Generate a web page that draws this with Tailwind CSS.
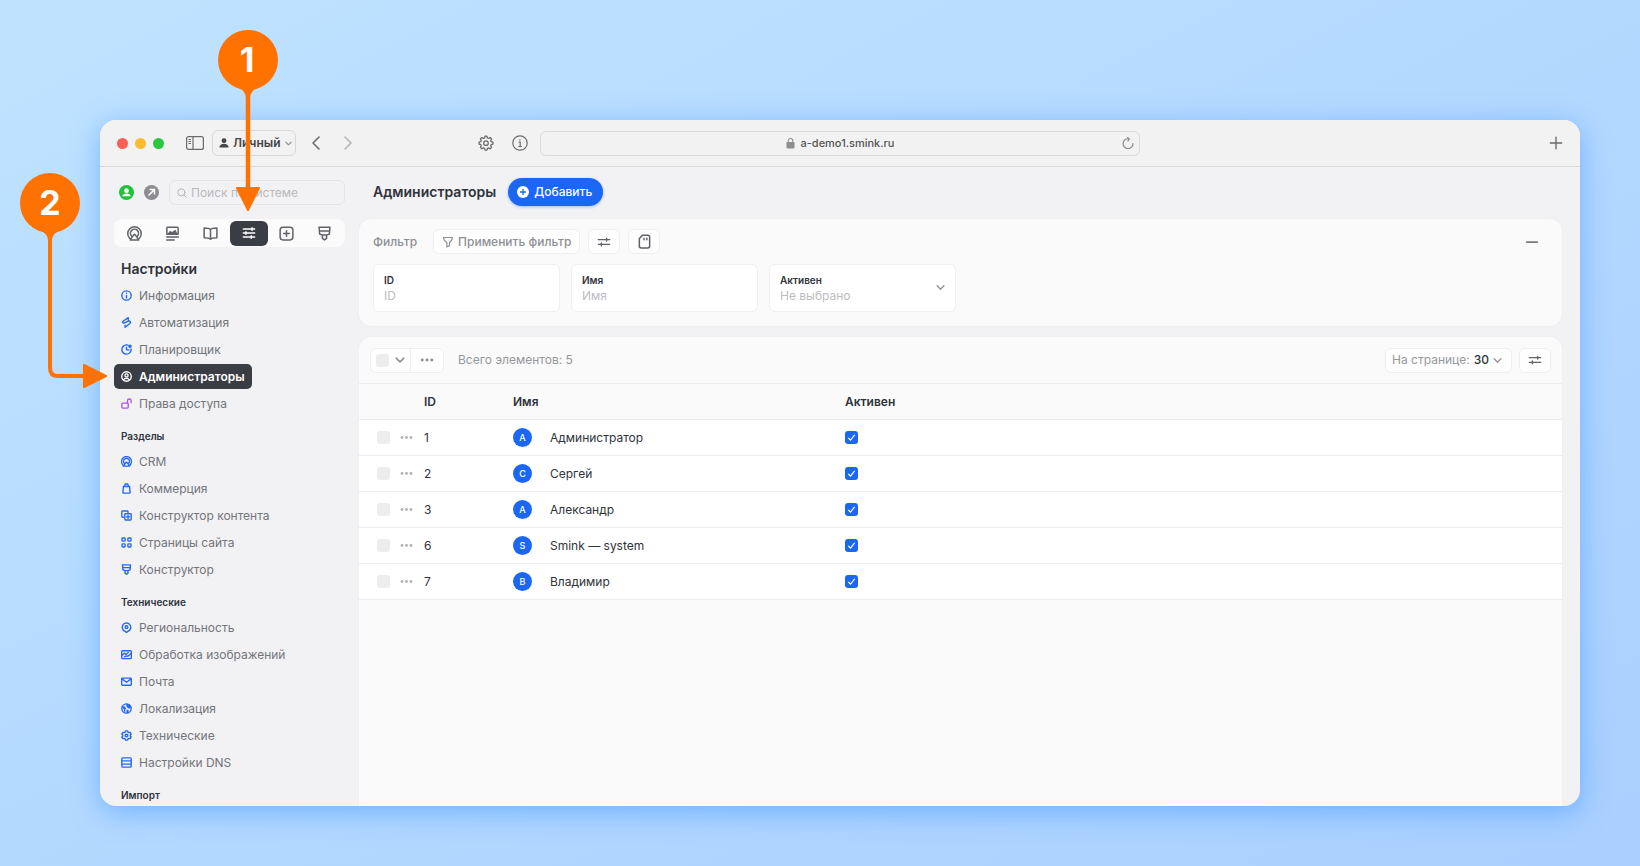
<!DOCTYPE html>
<html lang="ru">
<head>
<meta charset="utf-8">
<title>Администраторы</title>
<script src="https://cdn.jsdelivr.net/npm/@tailwindcss/browser@4"></script>
</head>
<body class="min-h-screen bg-linear-to-br from-[#bfe3ff] via-[#b4d9ff] to-[#a9d0ff] font-['Inter','Noto_Sans',sans-serif] text-xs leading-5 text-[#2f333a] [&_use]:fill-none [&_use]:stroke-current [&_use]:[stroke-width:1.6] [&_use]:[stroke-linecap:round] [&_use]:[stroke-linejoin:round]">

<!-- Icon sprite -->
<svg class="hidden" aria-hidden="true">
    <symbol id="i-cast" viewBox="0 0 16 16"><path d="M2.800 13A7.200 7.200 0 1 1 13.200 13M4.800 10.600a4.300 4.300 0 1 1 6.400 0M3.400 14.800 7.400 9.200a.8.8 0 0 1 1.200 0l4 5.600z"/></symbol>
    <symbol id="i-post" viewBox="0 0 16 16"><path d="M3 1.200h10a1 1 0 0 1 1 1v6.600H2V2.200a1 1 0 0 1 1-1zM1.800 11.800h12.400M1.800 14.800h8"/><path d="M2.500 8.500l3-3.500 2 1.500L11 4l2.500 4.500z" fill="currentColor" stroke="none"/></symbol>
    <symbol id="i-book" viewBox="0 0 16 16"><path d="M8 3.500v10.500M8 3.500C6.500 2 4 2 1.200 2v10.500c2.800 0 5.300 0 6.800 1.500 1.500-1.500 4-1.500 6.800-1.500V2C12 2 9.500 2 8 3.500z"/></symbol>
    <symbol id="i-sliders3" viewBox="0 0 16 16"><path d="M1.500 3.500h13M1.500 8h13M1.500 12.500h13M11.500 2v3M4.500 6.500v3M10.500 11v3"/></symbol>
    <symbol id="i-plusbox" viewBox="0 0 16 16"><rect x="1.200" y="1.200" width="13.600" height="13.600" rx="3"/><path d="M8 5v6M5 8h6"/></symbol>
    <symbol id="i-brush" viewBox="0 0 16 16"><path d="M2.200 1.200h11.600L13.200 8.500l-3 1.200v3.500L8 14.800l-2.200-1.600V9.700l-3-1.200zM2.500 5.300h11M5.800 9.700h4.400"/></symbol>
    <symbol id="i-info" viewBox="0 0 16 16"><circle cx="8" cy="8" r="6.800"/><path d="M8 7.800v3.700M8 4.600v.1"/></symbol>
    <symbol id="i-auto" viewBox="0 0 16 16"><path d="M10.500 1 3 6.200c-1.400 1.300-.2 3.300 1.600 2.600L10.500 6c2.600-1 4.200 1.600 2.400 3.400L6 15M10.500 1v3.200M6 15v-3.200"/></symbol>
    <symbol id="i-clock" viewBox="0 0 16 16"><path d="M14.600 7.200a6.700 6.700 0 1 1-4.600-5.500M8 4.500V8.500h3.500"/><circle cx="13" cy="3.200" r="1.600" fill="currentColor"/></symbol>
    <symbol id="i-user" viewBox="0 0 16 16"><circle cx="8" cy="8" r="6.900"/><circle cx="8" cy="6.500" r="2.300"/><path d="M3.800 13c1-3 7.400-3 8.400 0"/></symbol>
    <symbol id="i-unlock" viewBox="0 0 16 16"><rect x="1.200" y="7.500" width="9.300" height="7.200" rx="1.500"/><path d="M9.500 7.500V4a2.600 2.600 0 0 1 5.200 0v2.500"/></symbol>
    <symbol id="i-bag" viewBox="0 0 16 16"><path d="M3.500 5h9l.7 8.700a1 1 0 0 1-1 1.100H3.800a1 1 0 0 1-1-1.100zM5 5l1.200-3.500h3.600L11 5"/></symbol>
    <symbol id="i-copy" viewBox="0 0 16 16"><path d="M3.500 10.500H2.200a1 1 0 0 1-1-1v-7a1 1 0 0 1 1-1h7a1 1 0 0 1 1 1v1.500"/><rect x="5.500" y="5.500" width="9.300" height="9" rx="1"/><path d="M10.200 7.800v4.400M8 10h4.400"/></symbol>
    <symbol id="i-grid" viewBox="0 0 16 16"><rect x="1.500" y="1.500" width="4.500" height="4.500" rx="1"/><rect x="10" y="1.500" width="4.500" height="4.500" rx="1"/><rect x="1.500" y="10" width="4.500" height="4.500" rx="1"/><rect x="10" y="10" width="4.500" height="4.500" rx="1"/></symbol>
    <symbol id="i-pin" viewBox="0 0 16 16"><path d="M8 15l-2.500-1.700a6.200 6.200 0 1 1 5 0z"/><circle cx="8" cy="7.500" r="2"/></symbol>
    <symbol id="i-image" viewBox="0 0 16 16"><rect x="1" y="2.500" width="14" height="11.500" rx="1.200"/><path d="M1.500 9l3.500-3 2 2L10.500 5M5 11.500l3-1.500 2 .5 4.500-4"/></symbol>
    <symbol id="i-mail" viewBox="0 0 16 16"><rect x="1" y="3" width="14" height="10.500" rx="1"/><path d="M2 4.500l6 4.500 6-4.500"/></symbol>
    <symbol id="i-globe" viewBox="0 0 16 16"><circle cx="8" cy="8" r="6.800"/><path d="M2 5.500l3 .5 1.500 2-1.500 1 .5 3M9 2l-.5 2.500L11 7l3-.5-1.500-3zM9 10.500l1.500 1L9 14z" fill="currentColor"/></symbol>
    <symbol id="i-hex" viewBox="0 0 16 16"><path d="M6.500 1.300h3l.6 1.900 1.300.7 2-.5 1.400 2.500-1.400 1.500v1.200l1.400 1.500-1.400 2.500-2-.5-1.300.7-.6 1.900h-3l-.6-1.900-1.300-.7-2 .5-1.400-2.500 1.400-1.500V7.400L1.200 5.900l1.400-2.500 2 .5 1.300-.7z"/><circle cx="8" cy="8" r="1.900"/></symbol>
    <symbol id="i-server" viewBox="0 0 16 16"><rect x="1.200" y="1.200" width="13.600" height="13.600" rx="1.200"/><path d="M1.500 5.700h13M1.500 10.300h13"/></symbol>
    <symbol id="i-sliders2" viewBox="0 0 16 16"><path d="M1.500 5.300h13M1.500 10.700h13M11 3.800v3M5 9.200v3"/></symbol>
    <symbol id="i-sd" viewBox="0 0 16 16"><path d="M6 1.200h5.500a2 2 0 0 1 2 2v9.600a2 2 0 0 1-2 2h-7a2 2 0 0 1-2-2V4.700zM7.500 4.500v1.500M10.500 4.500v1.500"/></symbol>
    <symbol id="i-funnel" viewBox="0 0 16 16"><path d="M2 2h12l-1 3.500-3 3.500v4L6.500 14.500V9L3 5.500z"/></symbol>
    <symbol id="i-search" viewBox="0 0 16 16"><circle cx="7" cy="7" r="5.700"/><path d="M11.200 11.200l3.600 3.600"/></symbol>
    <symbol id="i-down" viewBox="0 0 16 16"><path d="M2 5l6 6 6-6" stroke-width="2.400"/></symbol>
    <symbol id="i-left" viewBox="0 0 16 16"><path d="M11 2 5 8l6 6"/></symbol>
    <symbol id="i-right" viewBox="0 0 16 16"><path d="M5 2l6 6-6 6"/></symbol>
    <symbol id="i-plus" viewBox="0 0 16 16"><path d="M8 1.500v13M1.500 8h13"/></symbol>
    <symbol id="i-minus" viewBox="0 0 16 16"><path d="M2 8h12" stroke-width="2"/></symbol>
    <symbol id="i-dots" viewBox="0 0 16 16"><g fill="currentColor" stroke="none"><circle cx="2.500" cy="8" r="1.700"/><circle cx="8" cy="8" r="1.700"/><circle cx="13.500" cy="8" r="1.700"/></g></symbol>
    <symbol id="i-gear" viewBox="0 0 20 20"><path d="M8.800 1.500h2.400l.6 2.200 1.500.6 2-1.100 1.700 1.700-1.100 2 .6 1.500 2.200.6v2.400l-2.200.6-.6 1.500 1.100 2-1.700 1.700-2-1.100-1.500.6-.6 2.200H8.800l-.6-2.200-1.500-.6-2 1.100L3 15.500l1.100-2-.6-1.500-2.200-.6V9l2.200-.6.600-1.500-1.100-2 1.700-1.700 2 1.100 1.500-.6z"/><circle cx="10" cy="10.200" r="2.800"/></symbol>
</svg>

<div class="flex h-screen min-h-[600px] pt-[120px] pr-15 pb-15 pl-25">
  <div class="flex min-w-0 flex-1 flex-col overflow-hidden rounded-2xl bg-[#f2f2f4] shadow-[0_6px_28px_rgba(50,140,255,0.5)]">

    <!-- Browser toolbar -->
    <header class="flex h-[47px] shrink-0 items-center border-b border-[#d9d9d9] bg-[#f2f2f2] px-[17px] text-[#6b6b6b]">
      <div class="flex flex-1 items-center">
        <div class="flex gap-[7px]">
          <span class="size-[11px] rounded-full bg-[#fe5d57]"></span>
          <span class="size-[11px] rounded-full bg-[#febb2e]"></span>
          <span class="size-[11px] rounded-full bg-[#29c840]"></span>
        </div>
        <button class="ml-[22px]" aria-label="Боковая панель">
          <svg class="h-[14px] w-[18px]" viewBox="0 0 18 14" fill="none" stroke="currentColor" stroke-width="1.200"><rect x=".6" y=".6" width="16.800" height="12.800" rx="2"/><path d="M7 .6v12.800M2.500 3.500h2.500M2.500 5.500h2.500M2.500 7.500h2.500"/></svg>
        </button>
        <button class="ml-2 flex h-[26px] w-[84px] items-center gap-1 rounded-md border border-[#d8d8d8] px-1.5 font-semibold text-[#454545]">
          <svg class="size-[10px] shrink-0" viewBox="0 0 12 12" fill="currentColor"><circle cx="6" cy="3.200" r="2.900"/><path d="M.5 11.500c0-6 11-6 11 0z"/></svg>
          Личный
          <svg class="ml-auto size-[7px] shrink-0 text-[#888]"><use href="#i-down"/></svg>
        </button>
        <button class="ml-3" aria-label="Назад"><svg class="size-4"><use href="#i-left"/></svg></button>
        <button class="ml-4 text-[#b5b5b5]" aria-label="Вперёд"><svg class="size-4"><use href="#i-right"/></svg></button>
        <button class="ml-auto" aria-label="Параметры"><svg class="size-4"><use href="#i-gear"/></svg></button>
        <button class="ml-[18px] mr-3" aria-label="О странице">
          <svg class="size-4" viewBox="0 0 16 16" fill="none" stroke="currentColor" stroke-width="1.200"><circle cx="8" cy="8" r="7.200"/><path d="M6.500 7h1.700v4.300M6.300 11.500h3.600M7.900 4.200v1.200"/></svg>
        </button>
      </div>
      <div class="flex h-[25px] w-[600px] items-center rounded-md border border-[#dadada] px-[5px] text-[11px] font-medium">
        <span class="flex flex-1 items-center justify-center gap-1.5 pl-3 text-[#555]">
          <svg class="h-3 w-[9px] text-[#8e8e8e]" viewBox="0 0 10 12"><rect x=".5" y="5" width="9" height="7" rx="1.200" fill="currentColor"/><path d="M2.500 5.500V3.500a2.500 2.500 0 0 1 5 0v2" fill="none" stroke="currentColor" stroke-width="1.200"/></svg>
          a-demo1.smink.ru
        </span>
        <button aria-label="Обновить" class="text-[#8b8b8b]"><svg class="size-3" viewBox="0 0 12 12" fill="none" stroke="currentColor" stroke-width="1.200" stroke-linecap="round" stroke-linejoin="round"><path d="M10.900 6.500A4.900 4.900 0 1 1 6.800 1.800M5.500.6l1.900 1.400L6 3.900"/></svg></button>
      </div>
      <div class="flex flex-1 justify-end">
        <button aria-label="Новая вкладка"><svg class="size-[14px]"><use href="#i-plus"/></svg></button>
      </div>
    </header>

    <div class="flex min-h-0 flex-1">
      <!-- Sidebar -->
      <aside class="w-[259px] shrink-0 overflow-hidden px-[14px] pt-[13px] text-[#72757b]">
        <div class="flex items-center pl-[5px]">
          <svg class="size-[15px]" viewBox="0 0 16 16"><circle cx="8" cy="8" r="8" fill="#20c13c"/><circle cx="8" cy="6" r="2.500" fill="#fff"/><path d="M3.500 12c.5-4 8.500-4 9 0z" fill="#fff"/></svg>
          <svg class="ml-2.5 size-[15px]" viewBox="0 0 16 16"><circle cx="8" cy="8" r="8" fill="#8c8c91"/><path d="M4.800 11.200l6-6M6 4.800h5.200V10" fill="none" stroke="#fff" stroke-width="1.600"/></svg>
          <label class="ml-2.5 flex h-[25px] min-w-0 flex-1 items-center gap-1 rounded-md border border-[#e4e4e6] px-[7px] text-[#b5b5b9]">
            <svg class="size-2.5 shrink-0"><use href="#i-search"/></svg>
            <input type="search" aria-label="Поиск по системе" placeholder="Поиск по системе" class="w-full min-w-0 bg-transparent outline-none placeholder:text-[#b9b9bd]">
          </label>
        </div>
        <nav class="mt-[14px] grid h-7 grid-cols-6 items-center rounded-lg bg-[#fbfbfb] px-px text-[#606268]" aria-label="Разделы системы">
          <button class="flex h-[25px] items-center justify-center" aria-label="CRM"><svg class="size-[15px]"><use href="#i-cast"/></svg></button>
          <button class="flex h-[25px] items-center justify-center" aria-label="Контент"><svg class="size-[15px]"><use href="#i-post"/></svg></button>
          <button class="flex h-[25px] items-center justify-center" aria-label="Справочники"><svg class="size-[15px]"><use href="#i-book"/></svg></button>
          <button class="flex h-[25px] items-center justify-center rounded-md bg-[#3a3d44] text-white" aria-label="Настройки"><svg class="size-[14px]"><use href="#i-sliders3"/></svg></button>
          <button class="flex h-[25px] items-center justify-center" aria-label="Добавить"><svg class="size-[15px]"><use href="#i-plusbox"/></svg></button>
          <button class="flex h-[25px] items-center justify-center" aria-label="Оформление"><svg class="size-[15px]"><use href="#i-brush"/></svg></button>
        </nav>

        <div class="[&_use]:[stroke-width:2]!">
        <h2 class="mt-3 pl-[7px] text-sm leading-5 font-semibold text-[#2f333a]">Настройки</h2>
        <ul class="mt-1 flex flex-col items-start gap-0.5">
          <li><a href="#" class="flex h-[25px] items-center gap-[7px] px-[7px]"><svg class="size-[11px] text-[#2468f2]"><use href="#i-info"/></svg>Информация</a></li>
          <li><a href="#" class="flex h-[25px] items-center gap-[7px] px-[7px]"><svg class="size-[11px] text-[#2468f2]"><use href="#i-auto"/></svg>Автоматизация</a></li>
          <li><a href="#" class="flex h-[25px] items-center gap-[7px] px-[7px]"><svg class="size-[11px] text-[#2468f2]"><use href="#i-clock"/></svg>Планировщик</a></li>
          <li><a href="#" aria-current="page" class="flex h-[25px] items-center gap-[7px] rounded-[5px] bg-[#3a3d44] px-[7px] pr-[7px] font-semibold text-white"><svg class="size-[11px]"><use href="#i-user"/></svg>Администраторы</a></li>
          <li><a href="#" class="flex h-[25px] items-center gap-[7px] px-[7px]"><svg class="size-[11px] text-[#a855f7]"><use href="#i-unlock"/></svg>Права доступа</a></li>
        </ul>

        <h3 class="mt-[10px] pl-[7px] text-[10px] leading-5 font-semibold text-[#2f333a]">Разделы</h3>
        <ul class="mt-[3px] flex flex-col items-start gap-0.5">
          <li><a href="#" class="flex h-[25px] items-center gap-[7px] px-[7px]"><svg class="size-[11px] text-[#2468f2]"><use href="#i-cast"/></svg>CRM</a></li>
          <li><a href="#" class="flex h-[25px] items-center gap-[7px] px-[7px]"><svg class="size-[11px] text-[#2468f2]"><use href="#i-bag"/></svg>Коммерция</a></li>
          <li><a href="#" class="flex h-[25px] items-center gap-[7px] px-[7px]"><svg class="size-[11px] text-[#2468f2]"><use href="#i-copy"/></svg>Конструктор контента</a></li>
          <li><a href="#" class="flex h-[25px] items-center gap-[7px] px-[7px]"><svg class="size-[11px] text-[#2468f2]"><use href="#i-grid"/></svg>Страницы сайта</a></li>
          <li><a href="#" class="flex h-[25px] items-center gap-[7px] px-[7px]"><svg class="size-[11px] text-[#2468f2]"><use href="#i-brush"/></svg>Конструктор</a></li>
        </ul>

        <h3 class="mt-[10px] pl-[7px] text-[10px] leading-5 font-semibold text-[#2f333a]">Технические</h3>
        <ul class="mt-[3px] flex flex-col items-start gap-0.5">
          <li><a href="#" class="flex h-[25px] items-center gap-[7px] px-[7px]"><svg class="size-[11px] text-[#2468f2]"><use href="#i-pin"/></svg>Региональность</a></li>
          <li><a href="#" class="flex h-[25px] items-center gap-[7px] px-[7px]"><svg class="size-[11px] text-[#2468f2]"><use href="#i-image"/></svg>Обработка изображений</a></li>
          <li><a href="#" class="flex h-[25px] items-center gap-[7px] px-[7px]"><svg class="size-[11px] text-[#2468f2]"><use href="#i-mail"/></svg>Почта</a></li>
          <li><a href="#" class="flex h-[25px] items-center gap-[7px] px-[7px]"><svg class="size-[11px] text-[#2468f2]"><use href="#i-globe"/></svg>Локализация</a></li>
          <li><a href="#" class="flex h-[25px] items-center gap-[7px] px-[7px]"><svg class="size-[11px] text-[#2468f2]"><use href="#i-hex"/></svg>Технические</a></li>
          <li><a href="#" class="flex h-[25px] items-center gap-[7px] px-[7px]"><svg class="size-[11px] text-[#2468f2]"><use href="#i-server"/></svg>Настройки DNS</a></li>
        </ul>

        <h3 class="mt-[10px] pl-[7px] text-[10px] leading-5 font-semibold text-[#2f333a]">Импорт</h3>
        </div>
      </aside>

      <!-- Main column -->
      <main class="flex min-w-0 flex-1 flex-col pt-[11px] pr-[18px]">
        <div class="flex items-center gap-3 pl-[14px]">
          <h1 class="text-sm leading-5 font-semibold">Администраторы</h1>
          <button class="flex h-7 items-center gap-[5px] rounded-full bg-[#1b67f3] pr-[11px] pl-[9px] font-medium text-white shadow-[0_1px_3px_rgba(27,103,243,0.4)]">
            <svg class="size-3" viewBox="0 0 12 12"><circle cx="6" cy="6" r="6" fill="#fff"/><path d="M6 3v6M3 6h6" stroke="#1b67f3" stroke-width="1.300"/></svg>
            Добавить
          </button>
        </div>

        <section class="mt-[13px] rounded-xl bg-[#fafafa] px-[14px] pt-[10px] pb-[14px] shadow-[0_0_2px_rgba(0,0,0,0.06)]">
          <div class="flex items-center gap-2">
            <span class="mr-2 font-medium text-[#8d8f94]">Фильтр</span>
            <button class="flex h-[25px] items-center gap-1 rounded-md border border-[#efefef] bg-[#fefefe] px-2 font-medium text-[#8d8f94]"><svg class="size-3"><use href="#i-funnel"/></svg>Применить фильтр</button>
            <button class="flex h-[25px] w-8 items-center justify-center rounded-md border border-[#efefef] bg-[#fefefe] text-[#606268]" aria-label="Поля фильтра"><svg class="size-[14px]"><use href="#i-sliders2"/></svg></button>
            <button class="flex h-[25px] w-8 items-center justify-center rounded-md border border-[#efefef] bg-[#fefefe] text-[#606268]" aria-label="Сохранить фильтр"><svg class="size-[15px]"><use href="#i-sd"/></svg></button>
            <button class="mr-[9px] ml-auto text-[#77797e]" aria-label="Свернуть"><svg class="size-[14px]"><use href="#i-minus"/></svg></button>
          </div>
          <div class="mt-[10px] flex gap-[11px]">
            <label class="flex h-12 w-[187px] flex-col justify-center rounded-md border border-[#efefef] bg-white px-[10px] pb-px text-[10px] leading-4 font-semibold">ID
              <input placeholder="ID" class="w-full text-xs font-normal outline-none placeholder:text-[#bcbcc0]">
            </label>
            <label class="flex h-12 w-[187px] flex-col justify-center rounded-md border border-[#efefef] bg-white px-[10px] pb-px text-[10px] leading-4 font-semibold">Имя
              <input placeholder="Имя" class="w-full text-xs font-normal outline-none placeholder:text-[#bcbcc0]">
            </label>
            <label class="flex h-12 w-[187px] items-center rounded-md border border-[#efefef] bg-white px-[10px] pb-px text-[10px] leading-4 font-semibold">
              <span class="flex flex-1 flex-col">Активен
                <select class="appearance-none text-xs font-normal text-[#bcbcc0] outline-none"><option>Не выбрано</option></select>
              </span>
              <svg class="size-[9px] text-[#8d8f94]"><use href="#i-down"/></svg>
            </label>
          </div>
        </section>

        <section class="mt-[11px] min-h-0 flex-1 overflow-hidden rounded-t-xl bg-[#fafafa] shadow-[0_0_2px_rgba(0,0,0,0.06)]">
          <div class="flex h-[46px] items-center px-[11px]">
            <div class="flex h-[25px] items-center rounded-md border border-[#efefef] bg-[#fefefe]">
              <label class="flex h-full w-10 items-center gap-1.5 border-r border-[#efefef] pl-[5px] text-[#8d8f94]">
                <input type="checkbox" aria-label="Выбрать все" class="size-[13px] appearance-none rounded-[3px] bg-[#ededed]">
                <svg class="size-[10px]"><use href="#i-down"/></svg>
              </label>
              <button class="flex h-full w-8 items-center justify-center text-[#8d8f94]" aria-label="Действия"><svg class="size-[14px]"><use href="#i-dots"/></svg></button>
            </div>
            <span class="ml-[14px] text-[#96989c]">Всего элементов: 5</span>
            <button class="ml-auto flex h-[25px] items-center gap-1 rounded-md border border-[#efefef] bg-[#fefefe] pr-[9px] pl-1.5 text-[#96989c]">На странице: <span class="font-medium text-[#2f333a]">30</span><svg class="size-[9px]"><use href="#i-down"/></svg></button>
            <button class="ml-[7px] flex h-[25px] w-8 items-center justify-center rounded-md border border-[#efefef] bg-[#fefefe] text-[#606268]" aria-label="Настроить столбцы"><svg class="size-[14px]"><use href="#i-sliders2"/></svg></button>
          </div>
          <table class="w-full table-fixed border-t border-[#ededed] text-left">
            <colgroup><col class="w-[65px]"><col class="w-[89px]"><col class="w-[332px]"><col></colgroup>
            <thead>
              <tr class="h-9 border-b border-[#ededed]"><th aria-label="Выбор"></th><th class="font-semibold">ID</th><th class="font-semibold">Имя</th><th class="font-semibold">Активен</th></tr>
            </thead>
            <tbody id="rows" class="bg-white"></tbody>
          </table>
        </section>
      </main>
    </div>
  </div>
</div>

<!-- Step callouts -->
<svg class="pointer-events-none absolute top-0 left-0 h-[400px] w-[320px]" viewBox="0 0 320 400" fill="#ff7200">
  <circle cx="248" cy="60" r="30"/>
  <path d="M239 88c5 2 7 6 7 10v92h4V98c0-4 2-8 7-10z" stroke="#ff7200" stroke-width=".5"/>
  <path d="M237 188h22l-11 22z" stroke="#ff7200" stroke-width="2" stroke-linejoin="round"/>
  <circle cx="50" cy="203" r="30"/>
  <path d="M41 231c5 2 7 6 7 10h4c0-4 2-8 7-10z"/>
  <path d="M50 236v132q0 8 8 8h27" fill="none" stroke="#ff7200" stroke-width="4"/>
  <path d="M84 365v22l22-11z" stroke="#ff7200" stroke-width="2" stroke-linejoin="round"/>
  <g fill="#fff" font-size="34" font-weight="700" text-anchor="middle"><text x="247" y="72">1</text><text x="50" y="215">2</text></g>
</svg>

<template id="row">
  <tr class="h-9 border-b border-[#ededed]">
    <td><span class="flex items-center gap-[10px] pl-[18px]"><input type="checkbox" class="size-[13px] appearance-none rounded-[3px] bg-[#ededed]"><button class="text-[#b0b0b4]" aria-label="Действия"><svg class="size-[13px]"><use href="#i-dots"/></svg></button></span></td>
    <td data-id></td>
    <td><span class="flex items-center gap-[18px]"><span data-letter class="flex size-[19px] items-center justify-center rounded-full bg-[#1b67f3] text-[9px] font-medium text-white"></span><span data-name></span></span></td>
    <td><span class="grid size-[13px]"><input type="checkbox" checked aria-label="Активен" class="col-start-1 row-start-1 size-[13px] appearance-none rounded-[3px] bg-[#1b67f3]"><svg class="pointer-events-none col-start-1 row-start-1 size-[13px]" viewBox="0 0 13 13" fill="none" stroke="#fff" stroke-width="1.200"><path d="M3.200 6.800l2.300 2.400 4.200-5.400"/></svg></span></td>
  </tr>
</template>
<script>
  const people = [[1, 'А', 'Администратор'], [2, 'С', 'Сергей'], [3, 'А', 'Александр'], [6, 'S', 'Smink — system'], [7, 'В', 'Владимир']];
  const body = document.getElementById('rows');
  for (const [id, letter, name] of people) {
    const row = document.getElementById('row').content.cloneNode(true);
    row.querySelector('[data-id]').textContent = id;
    row.querySelector('[data-letter]').textContent = letter;
    row.querySelector('[data-name]').textContent = name;
    row.querySelector('input').setAttribute('aria-label', 'Выбрать: ' + name);
    body.append(row);
  }
</script>
</body>
</html>
